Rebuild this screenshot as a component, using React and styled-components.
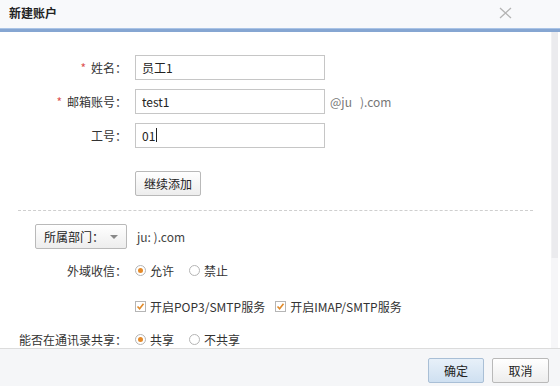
import React from "react";
import styled, { createGlobalStyle } from "styled-components";

const Global = createGlobalStyle`
  html, body { margin: 0; padding: 0; background: #fff; }
  body { font-family: "Noto Sans CJK SC", "Liberation Sans", sans-serif; font-size: 12px; color: #333; }
  * { box-sizing: border-box; }
`;

const Dialog = styled.div`
  width: 560px;
  height: 386px;
  display: flex;
  flex-direction: column;
  background: #fff;
  overflow: hidden;
`;

const TitleBar = styled.div`
  height: 32px;
  flex: none;
  display: flex;
  align-items: center;
  justify-content: space-between;
  padding: 0 48px 4px 9px;
  background: #f8f9fb;
  border-bottom: 3px solid #86a6d2;
  box-shadow: inset 0 -1px 0 #aac4e6;
`;

const Title = styled.div`
  font-weight: bold;
  font-size: 12px;
  color: #222;
`;

const Close = styled.svg`
  width: 13px;
  height: 12px;
`;

const BodyWrap = styled.div`
  flex: 1;
  display: flex;
  min-height: 0;
`;

const Content = styled.div`
  flex: 1;
  padding-top: 23px;
  display: flex;
  flex-direction: column;
  overflow: hidden;
`;

const Scroll = styled.div`
  width: 7px;
  margin-right: 2px;
  display: flex;
  flex-direction: column;
  background: #f6f6f8;
`;

const Thumb = styled.div`
  height: 226px;
  background: #ebebee;
  border-left: 1px solid #f1f1f3;
`;

const Row = styled.div`
  display: flex;
  flex-shrink: 0;
  align-items: center;
  height: ${p => p.$h || 24}px;
  margin-bottom: ${p => p.$mb || 0}px;
`;

const Label = styled.div`
  width: 127px;
  text-align: right;
  margin-right: 8px;
  white-space: nowrap;
  color: #333;
`;

const Star = styled.span`
  color: #d55;
  margin-right: 5px;
`;

const Input = styled.div`
  width: 190px;
  height: 25px;
  border: 1px solid #c6c6c6;
  padding: 0 6px;
  display: flex;
  align-items: center;
  font-size: 12px;
  color: #222;
`;

const Caret = styled.span`
  display: inline-block;
  width: 1px;
  height: 14px;
  background: #222;
  margin-left: 1px;
`;

const Suffix = styled.span`
  margin-left: 5px;
  color: #777;
`;

const Btn = styled.div`
  height: 25px;
  ${p => (p.$w ? `width: ${p.$w}px;` : "")}
  padding: 0 ${p => p.$px ?? 9}px;
  display: inline-flex;
  align-items: center;
  justify-content: center;
  border: 1px solid ${p => (p.$primary ? "#a9bfd6" : "#b9b9b9")};
  border-radius: 2px;
  background: ${p =>
    p.$primary
      ? "linear-gradient(#e7f0f9, #cfe0f1)"
      : "linear-gradient(#ffffff, #ededed)"};
  color: #222;
  white-space: nowrap;
`;

const Dashed = styled.div`
  flex-shrink: 0;
  margin: 14px 18px 13px 18px;
  border-top: 1px dashed #cfcfcf;
`;

const Select = styled(Btn)`
  margin-left: 35px;
  width: 92px;
  justify-content: flex-start;
  padding: 0 0 0 8px;
`;

const Arrow = styled.span`
  width: 0;
  height: 0;
  border-left: 4px solid transparent;
  border-right: 4px solid transparent;
  border-top: 4px solid #888;
  margin-left: 6px;
`;

const Domain = styled.span`
  margin-left: 10px;
  color: #444;
`;

const Options = styled.div`
  display: flex;
  align-items: center;
`;

const Opt = styled.label`
  display: inline-flex;
  align-items: center;
  margin-right: ${p => p.$mr || 14}px;
  white-space: nowrap;
`;

const Radio = styled.span`
  width: 11px;
  height: 11px;
  border-radius: 50%;
  border: 1px solid #b5b5b5;
  background: #fff;
  margin-right: 4px;
  display: inline-flex;
  align-items: center;
  justify-content: center;
  &::after {
    content: "";
    width: 5px;
    height: 5px;
    border-radius: 50%;
    background: ${p => (p.$on ? "#e48a2a" : "transparent")};
  }
`;

const Check = styled.span`
  width: 11px;
  height: 11px;
  border: 1px solid #b5b5b5;
  background: #fff;
  margin-right: 4px;
  display: inline-flex;
  align-items: center;
  justify-content: center;
`;

const Footer = styled.div`
  height: 38px;
  flex: none;
  display: flex;
  justify-content: flex-end;
  align-items: flex-start;
  padding: 9px 11px 0 0;
  gap: 8px;
  background: #f5f6f8;
  border-top: 1px solid #dcdcdc;
`;

const Tick = () => (
  <svg width="9" height="9" viewBox="0 0 9 9">
    <path d="M1.5 4.5 L3.6 6.8 L7.5 1.8" fill="none" stroke="#e08a2a" strokeWidth="1.6" />
  </svg>
);

export default function App() {
  return (
    <>
      <Global />
      <Dialog>
        <TitleBar>
          <Title>新建账户</Title>
          <Close viewBox="0 0 13 12">
            <path d="M1 1 L12 11 M12 1 L1 11" stroke="#b4b4b4" strokeWidth="1.3" fill="none" />
          </Close>
        </TitleBar>
        <BodyWrap>
          <Content>
            <Row $mb={10}>
              <Label><Star>*</Star>姓名：</Label>
              <Input>员工1</Input>
            </Row>
            <Row $mb={10}>
              <Label><Star>*</Star>邮箱账号：</Label>
              <Input>test1</Input>
              <Suffix>@ju&nbsp;&nbsp;&nbsp;).com</Suffix>
            </Row>
            <Row $mb={24}>
              <Label>工号：</Label>
              <Input>01<Caret /></Input>
            </Row>
            <Row $h={25}>
              <Label />
              <Btn $px={8}>继续添加</Btn>
            </Row>
            <Dashed />
            <Row $h={25} $mb={10}>
              <Select>所属部门：<Arrow /></Select>
              <Domain>ju:&nbsp;).com</Domain>
            </Row>
            <Row $h={22} $mb={14}>
              <Label>外域收信：</Label>
              <Options>
                <Opt $mr={15}><Radio $on />允许</Opt>
                <Opt><Radio />禁止</Opt>
              </Options>
            </Row>
            <Row $h={22} $mb={11}>
              <Label />
              <Options>
                <Opt $mr={10}><Check><Tick /></Check>开启POP3/SMTP服务</Opt>
                <Opt><Check><Tick /></Check>开启IMAP/SMTP服务</Opt>
              </Options>
            </Row>
            <Row $h={22}>
              <Label>能否在通讯录共享：</Label>
              <Options>
                <Opt $mr={15}><Radio $on />共享</Opt>
                <Opt><Radio />不共享</Opt>
              </Options>
            </Row>
          </Content>
          <Scroll>
            <Thumb />
          </Scroll>
        </BodyWrap>
        <Footer>
          <Btn $primary $w={56} $px={0}>确定</Btn>
          <Btn $w={57} $px={0}>取消</Btn>
        </Footer>
      </Dialog>
    </>
  );
}
